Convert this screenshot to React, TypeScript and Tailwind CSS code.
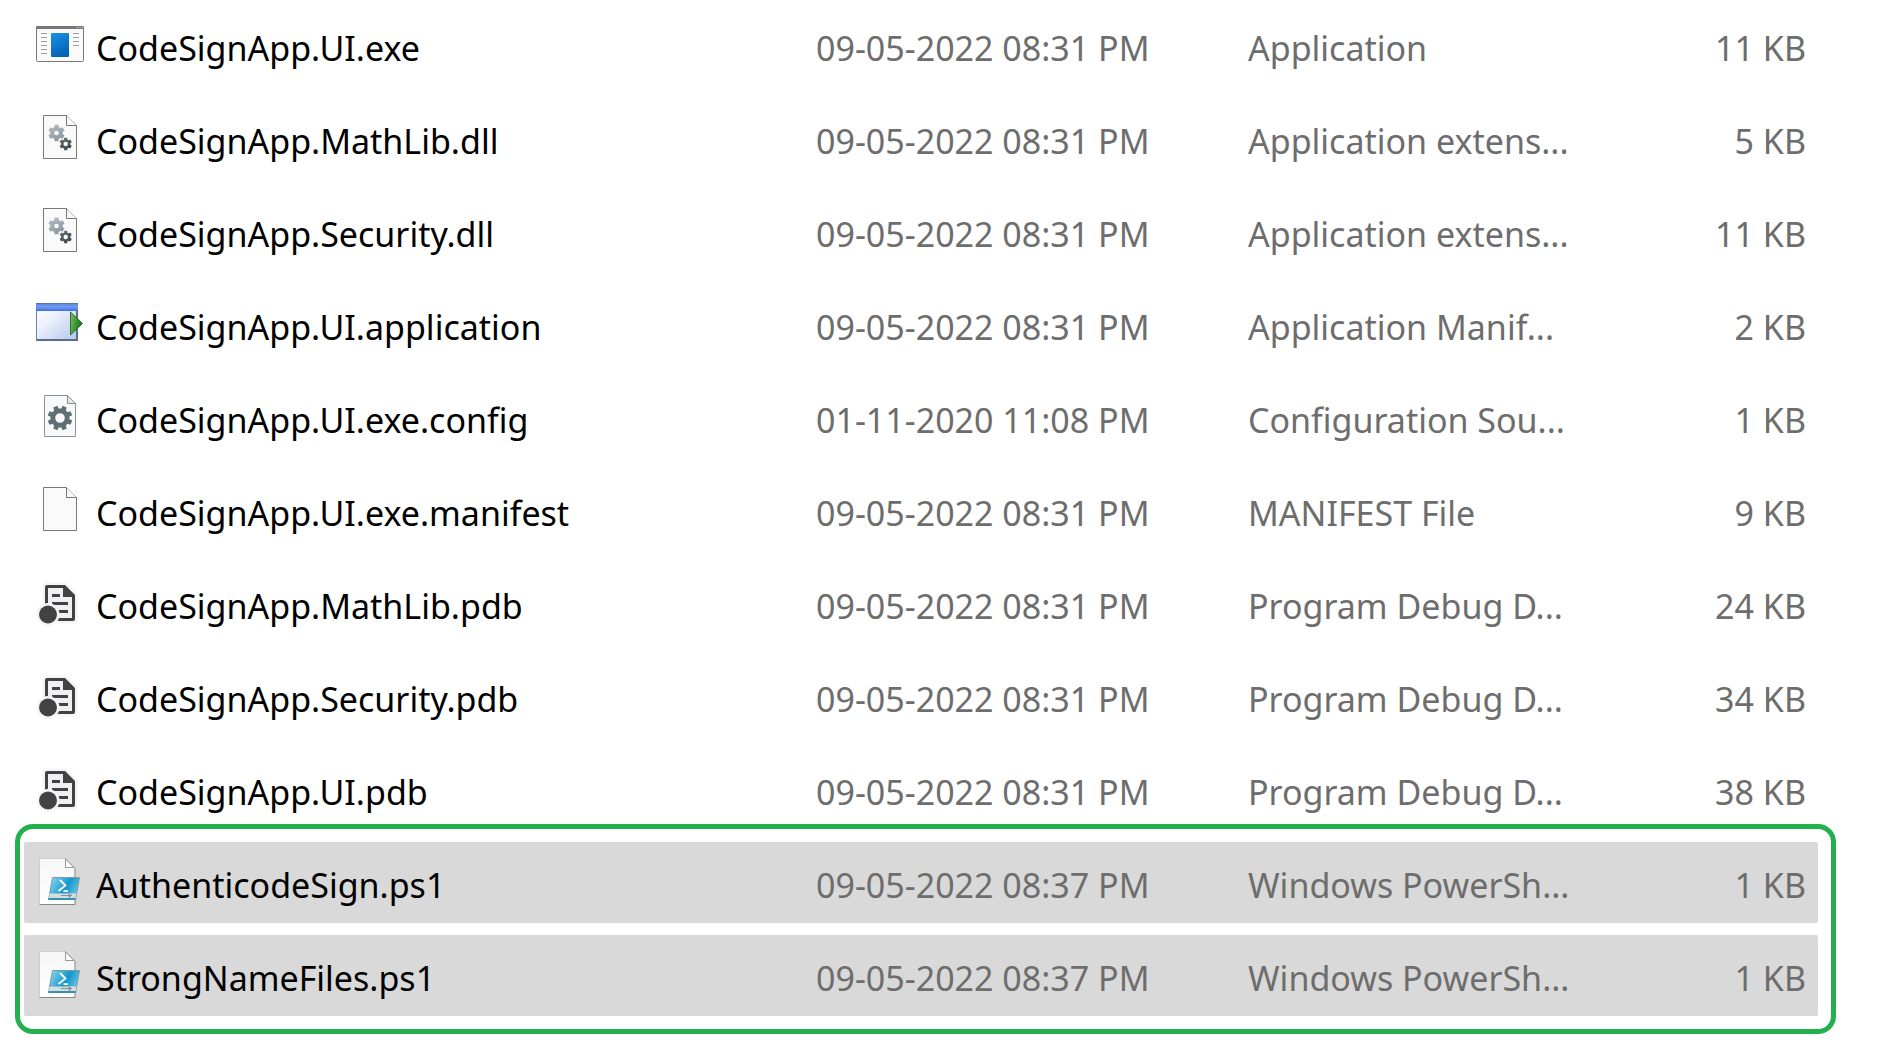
import React from 'react';

const iconClass = 'block h-12 w-12 shrink-0';

function gearPath(cx: number, cy: number, outer: number, inner: number, hole: number, teeth: number, turn = 0) {
  const pts: string[] = [];
  const step = (Math.PI * 2) / teeth;
  for (let i = 0; i < teeth; i++) {
    const a = i * step + turn;
    const corners: [number, number][] = [
      [inner, -0.32],
      [outer, -0.23],
      [outer, 0.23],
      [inner, 0.32],
    ];
    for (const [r, k] of corners) {
      pts.push(`${(cx + r * Math.sin(a + k * step)).toFixed(2)} ${(cy - r * Math.cos(a + k * step)).toFixed(2)}`);
    }
  }
  return `M${pts.join('L')}ZM${cx - hole} ${cy}a${hole} ${hole} 0 1 0 ${hole * 2} 0a${hole} ${hole} 0 1 0 ${-hole * 2} 0Z`;
}

function ExeIcon() {
  return (
    <svg viewBox="0 0 48 48" className={iconClass} aria-hidden="true">
      <defs>
        <linearGradient id="exe" x1="0" y1="0" x2="0.4" y2="1">
          <stop offset="0" stopColor="#1a93e2" />
          <stop offset="1" stopColor="#0663b7" />
        </linearGradient>
      </defs>
      <rect x="0.5" y="6.5" width="47" height="35" rx="1" fill="#fafafa" stroke="#797774" />
      <path d="M0 9V7q0-1 1-1h46q1 0 1 1v2z" fill="#797774" />
      <path d="M41 7.5h1M43.500 7.500h1M46 7.500h1" stroke="#e5e5e5" />
      <rect x="15" y="13" width="18" height="24" rx="1" fill="url(#exe)" />
      <path d="M5 13.5h6M5 17.500h6M5 21.500h6M5 25.500h6M5 29.500h6M5 33.500h6M37 13.500h6M37 17.500h6M37 21.500h6M37 25.500h6" stroke="#a09e9c" />
    </svg>
  );
}

function Page() {
  return (
    <g stroke="#797774" fill="#fafafa">
      <path d="M7.500 2.500H30.500L40.500 12.500V45.500H7.500Z" />
      <path d="M30.500 2.500V12.500H40.500" />
    </g>
  );
}

function DllIcon() {
  return (
    <svg viewBox="0 0 48 48" className={iconClass} aria-hidden="true">
      <defs>
        <linearGradient id="gearLight" x1="0" y1="0" x2="0.5" y2="1">
          <stop offset="0" stopColor="#b4bcc4" />
          <stop offset="1" stopColor="#8c98a2" />
        </linearGradient>
        <linearGradient id="gearDark" x1="0" y1="0" x2="0.5" y2="1">
          <stop offset="0" stopColor="#6a7479" />
          <stop offset="1" stopColor="#3e474b" />
        </linearGradient>
      </defs>
      <Page />
      <path fillRule="evenodd" fill="url(#gearLight)" d={gearPath(20.5, 20, 8.4, 6.4, 2.3, 6)} />
      <path fillRule="evenodd" fill="url(#gearDark)" d={gearPath(29.7, 31, 6.4, 4.8, 2.2, 6)} />
    </svg>
  );
}

function ApplicationIcon() {
  return (
    <svg viewBox="0 0 48 48" className={iconClass} aria-hidden="true">
      <defs>
        <linearGradient id="win" x1="0" y1="0" x2="1" y2="1">
          <stop offset="0" stopColor="#ffffff" />
          <stop offset="0.35" stopColor="#eef3fc" />
          <stop offset="1" stopColor="#b3c6ee" />
        </linearGradient>
        <linearGradient id="bar" x1="0" y1="0" x2="0" y2="1">
          <stop offset="0" stopColor="#5b84dc" />
          <stop offset="0.5" stopColor="#6f9bf2" />
          <stop offset="1" stopColor="#3f6fe0" />
        </linearGradient>
        <linearGradient id="play" x1="0" y1="0" x2="1" y2="0.3">
          <stop offset="0" stopColor="#7cbf6c" />
          <stop offset="0.5" stopColor="#3f9a35" />
          <stop offset="1" stopColor="#1f6f1a" />
        </linearGradient>
      </defs>
      <rect x="0.5" y="4.5" width="41" height="37" fill="url(#win)" stroke="#6d7fae" />
      <path d="M1 41H41V12" fill="none" stroke="#5b6a92" strokeWidth="2" />
      <rect x="0" y="4" width="42" height="8" fill="url(#bar)" />
      <path d="M0 4.500H42" stroke="#5471b8" />
      <path d="M34.500 13L46.500 24.500L34.500 36Z" fill="url(#play)" stroke="#2c7626" />
    </svg>
  );
}

function ConfigIcon() {
  return (
    <svg viewBox="0 0 48 48" className={iconClass} aria-hidden="true">
      <path d="M8.500 3.500H31.500L39.500 11.500V44.500H8.500Z" fill="#f7f9fa" stroke="#8b9194" />
      <path d="M31.500 3.500V11.500H39.500Z" fill="#e6e9ea" stroke="#8b9194" />
      <path fillRule="evenodd" fill="#5f7075" d={gearPath(24, 26, 12.5, 9.6, 4.8, 8, 0.39)} />
    </svg>
  );
}

function BlankIcon() {
  return (
    <svg viewBox="0 0 48 48" className={iconClass} aria-hidden="true">
      <Page />
    </svg>
  );
}

function PdbIcon() {
  return (
    <svg viewBox="0 0 48 48" className={iconClass} aria-hidden="true">
      <path d="M11 7H29L39 17V41Q39 43 37 43H11Q9 43 9 41V9Q9 7 11 7Z" fill="#424242" stroke="#f5f5f5" strokeWidth="5" strokeLinejoin="round" />
      <path d="M11 7H29L39 17V41Q39 43 37 43H11Q9 43 9 41V9Q9 7 11 7Z" fill="#424242" />
      <path d="M12 10H27V19H36V40H12Z" fill="#f0eff1" />
      <path d="M16 17.500H24M16 25.500H32M20 33.500H32" stroke="#424242" strokeWidth="3" />
      <circle cx="12" cy="36.500" r="11.500" fill="#f5f5f5" />
      <circle cx="12" cy="36.500" r="9" fill="#424242" />
    </svg>
  );
}

function PowerShellIcon() {
  return (
    <svg viewBox="0 0 48 48" className={iconClass} aria-hidden="true">
      <defs>
        <linearGradient id="sheet" x1="0" y1="0" x2="0" y2="1">
          <stop offset="0" stopColor="#f6f6f6" />
          <stop offset="1" stopColor="#ffffff" />
        </linearGradient>
        <linearGradient id="shell" x1="0" y1="0" x2="1" y2="0.4">
          <stop offset="0" stopColor="#9adcf0" />
          <stop offset="0.4" stopColor="#45b2dc" />
          <stop offset="0.65" stopColor="#1596cd" />
          <stop offset="1" stopColor="#5cc0e0" />
        </linearGradient>
      </defs>
      <path d="M4 1.500H29L39 11.500V47.500H4Z" fill="url(#sheet)" />
      <path d="M3.500 47V1.500H29" fill="none" stroke="#cdcdcd" />
      <path d="M29 1.500L39 11.500V47.500H3.500" fill="none" stroke="#858585" />
      <path d="M29.500 2V10.500H38Z" fill="#ffffff" stroke="#9a9a9a" />
      <path d="M16.500 20.500H43.500L39.500 42.500H12.500Z" fill="url(#shell)" stroke="#7a9aa5" />
      <path d="M13.600 36.500H40.400L39.600 41H12.800Z" fill="#d8dcdd" />
      <path d="M12.600 42H39.400" stroke="#2e93b4" strokeWidth="2" />
      <path d="M25 38.500H36" stroke="#8b8f90" />
      <path d="M33.500 37V40.500" stroke="#8b8f90" strokeWidth="2" />
      <path d="M24 23L29.500 28.500L22.500 34M27.500 34.200H32" fill="none" stroke="#ffffff" strokeWidth="1.800" />
    </svg>
  );
}

type FileRow = { icon: React.ComponentType; name: string; date: string; type: string; size: string };

const files: FileRow[] = [
  { icon: ExeIcon, name: 'CodeSignApp.UI.exe', date: '09-05-2022 08:31 PM', type: 'Application', size: '11 KB' },
  { icon: DllIcon, name: 'CodeSignApp.MathLib.dll', date: '09-05-2022 08:31 PM', type: 'Application extens...', size: '5 KB' },
  { icon: DllIcon, name: 'CodeSignApp.Security.dll', date: '09-05-2022 08:31 PM', type: 'Application extens...', size: '11 KB' },
  { icon: ApplicationIcon, name: 'CodeSignApp.UI.application', date: '09-05-2022 08:31 PM', type: 'Application Manif...', size: '2 KB' },
  { icon: ConfigIcon, name: 'CodeSignApp.UI.exe.config', date: '01-11-2020 11:08 PM', type: 'Configuration Sou...', size: '1 KB' },
  { icon: BlankIcon, name: 'CodeSignApp.UI.exe.manifest', date: '09-05-2022 08:31 PM', type: 'MANIFEST File', size: '9 KB' },
  { icon: PdbIcon, name: 'CodeSignApp.MathLib.pdb', date: '09-05-2022 08:31 PM', type: 'Program Debug D...', size: '24 KB' },
  { icon: PdbIcon, name: 'CodeSignApp.Security.pdb', date: '09-05-2022 08:31 PM', type: 'Program Debug D...', size: '34 KB' },
  { icon: PdbIcon, name: 'CodeSignApp.UI.pdb', date: '09-05-2022 08:31 PM', type: 'Program Debug D...', size: '38 KB' },
];

const scripts: FileRow[] = [
  { icon: PowerShellIcon, name: 'AuthenticodeSign.ps1', date: '09-05-2022 08:37 PM', type: 'Windows PowerSh...', size: '1 KB' },
  { icon: PowerShellIcon, name: 'StrongNameFiles.ps1', date: '09-05-2022 08:37 PM', type: 'Windows PowerSh...', size: '1 KB' },
];

function Row({ file, selected = false }: { file: FileRow; selected?: boolean }) {
  const Icon = file.icon;
  return (
    <tr
      aria-selected={selected}
      className={`grid grid-cols-[792fr_432fr_354fr_216fr] rounded-xs pt-[15px] pb-[18px] text-[34px] leading-[44px] whitespace-nowrap text-[#6d6d6d] ${selected ? 'bg-[#d9d9d9]' : ''}`}
    >
      <td className="flex h-12 gap-3 pl-3 text-black">
        <Icon />
        <span className="pt-1.5">{file.name}</span>
      </td>
      <td className="h-12 pt-1.5">{file.date}</td>
      <td className="h-12 pt-1.5">{file.type}</td>
      <td className="h-12 pt-1.5 pr-3 text-right">{file.size}</td>
    </tr>
  );
}

export default function App() {
  return (
    <main className="min-h-screen bg-white pt-[5px] pr-16 pb-12 pl-6 font-['Noto_Sans',sans-serif]">
      <table className="flex flex-col gap-3" aria-label="Files">
        <tbody className="flex flex-col gap-3">
          {files.map((f) => (
            <Row key={f.name} file={f} />
          ))}
        </tbody>
        <tbody className="relative flex flex-col gap-3 after:pointer-events-none after:absolute after:-top-[18px] after:-right-[18px] after:-bottom-[18px] after:-left-[9px] after:rounded-[18px] after:border-5 after:border-[#22b14c]">
          {scripts.map((f) => (
            <Row key={f.name} file={f} selected />
          ))}
        </tbody>
      </table>
    </main>
  );
}
